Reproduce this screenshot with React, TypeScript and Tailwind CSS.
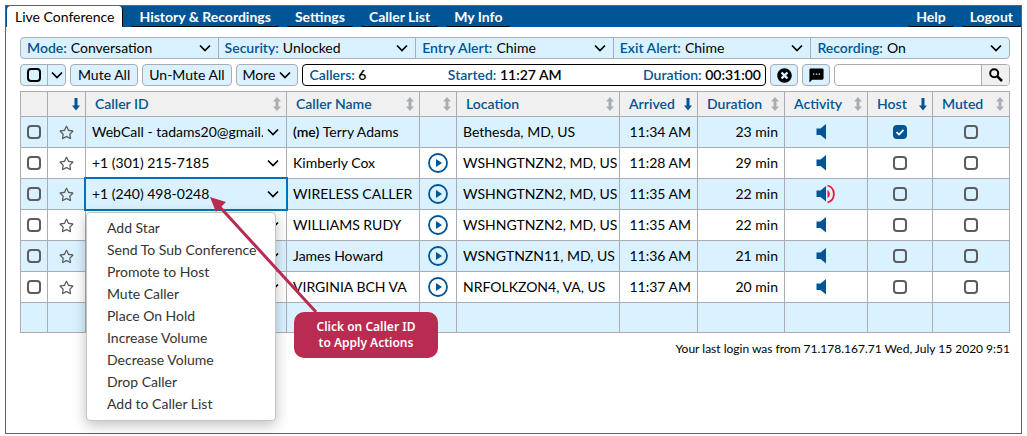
import React, { useState } from 'react';
import { FaRegStar, FaTimesCircle } from 'react-icons/fa';
import { MdSms } from 'react-icons/md';

type Caller = {
  id: string;
  name: string;
  me?: boolean;
  location: string;
  arrived: string;
  duration: string;
  host?: boolean;
  talking?: boolean;
};

const CALLERS: Caller[] = [
  { id: 'WebCall - tadams20@gmail.', name: 'Terry Adams', me: true, location: 'Bethesda, MD, US', arrived: '11:34 AM', duration: '23 min', host: true },
  { id: '+1 (301) 215-7185', name: 'Kimberly Cox', location: 'WSHNGTNZN2, MD, US', arrived: '11:28 AM', duration: '29 min' },
  { id: '+1 (240) 498-0248', name: 'WIRELESS CALLER', location: 'WSHNGTNZN2, MD, US', arrived: '11:35 AM', duration: '22 min', talking: true },
  { id: '', name: 'WILLIAMS RUDY', location: 'WSHNGTNZN2, MD, US', arrived: '11:35 AM', duration: '22 min' },
  { id: '', name: 'James Howard', location: 'WSNGTNZN11, MD, US', arrived: '11:36 AM', duration: '21 min' },
  { id: '', name: 'VIRGINIA BCH VA', location: 'NRFOLKZON4, VA, US', arrived: '11:37 AM', duration: '20 min' },
];

const ACTIONS = [
  'Add Star',
  'Send To Sub Conference',
  'Promote to Host',
  'Mute Caller',
  'Place On Hold',
  'Increase Volume',
  'Decrease Volume',
  'Drop Caller',
  'Add to Caller List',
];

const SETTINGS = [
  { id: 'mode', label: 'Mode:', options: ['Conversation', 'Presentation', 'Q&A'] },
  { id: 'security', label: 'Security:', options: ['Unlocked', 'Locked'] },
  { id: 'entry', label: 'Entry Alert:', options: ['Chime', 'None'] },
  { id: 'exit', label: 'Exit Alert:', options: ['Chime', 'None'] },
  { id: 'recording', label: 'Recording:', options: ['On', 'Off'] },
];

const COLUMNS = [
  { title: '', sort: '', width: 'w-[27px]' },
  { title: '', sort: 'down', width: 'w-[38px]' },
  { title: 'Caller ID', sort: 'both', width: 'w-[201px]' },
  { title: 'Caller Name', sort: 'both', width: 'w-[133px]' },
  { title: '', sort: 'both', width: 'w-[37px]' },
  { title: 'Location', sort: 'both', width: '' },
  { title: 'Arrived', sort: 'down', width: 'w-[78px]' },
  { title: 'Duration', sort: 'both', width: 'w-[87px]' },
  { title: 'Activity', sort: 'both', width: 'w-[83px]' },
  { title: 'Host', sort: 'down', width: 'w-[65px]' },
  { title: 'Muted', sort: 'both', width: 'w-[77px]' },
];

const Chevron = ({ className = '' }: { className?: string }) => (
  <svg className={`w-3 h-3 shrink-0 pointer-events-none ${className}`} viewBox="0 0 12 12" fill="none" stroke="#000" strokeWidth="1.7">
    <path d="M1 3.5 6 8.5 11 3.5" />
  </svg>
);

const SortIcon = ({ sort }: { sort: string }) => (
  <svg className="w-2 h-[14px] shrink-0" viewBox="0 0 8 14">
    {sort === 'down' ? (
      <path d="M2.5 1h3v7.500H8L4 13.500 0 8.500h2.500z" fill="#005596" />
    ) : (
      <path d="M4 0 8 4.500H5.500v5H8L4 14 0 9.500h2.500v-5H0z" fill="#a9adb3" />
    )}
  </svg>
);

const SearchIcon = () => (
  <svg className="w-[14px] h-[14px]" viewBox="0 0 14 14" fill="none" stroke="#000">
    <circle cx="5.2" cy="5.2" r="4" strokeWidth="2" />
    <path d="M8.300 8.300 13 13" strokeWidth="2.600" />
  </svg>
);

const Check = ({ label, checked = false, dark = false }: { label: string; checked?: boolean; dark?: boolean }) => (
  <span className="relative block w-[14px] h-[14px]">
    <input
      type="checkbox"
      aria-label={label}
      defaultChecked={checked}
      className={`peer block appearance-none w-[14px] h-[14px] border-2 rounded bg-transparent checked:bg-[#005596] checked:border-[#005596] ${
        dark ? 'border-black' : 'border-[#5c5c5c]'
      }`}
    />
    <svg
      className="absolute inset-0 hidden peer-checked:block pointer-events-none"
      viewBox="0 0 14 14"
      fill="none"
      stroke="#fff"
      strokeWidth="1.8"
    >
      <path d="M3.5 7.2 6 9.5 10.5 4.8" />
    </svg>
  </span>
);

const Speaker = ({ talking = false }: { talking?: boolean }) => (
  <svg className="w-5 h-5" viewBox="0 0 20 20" fill="none">
    <path d="M0.500 6.500H4.500L10 2v15.500L4.500 13H0.500z" fill="#005596" />
    {talking && (
      <>
        <path d="M11.500 6c3 1.500 3 6.500 0 8z" fill="#f5123a" />
        <path d="M11.500 1.500c8.500 2.500 8.500 14.500 0 17" stroke="#f5123a" strokeWidth="1.800" />
      </>
    )}
  </svg>
);

const Play = () => (
  <svg className="w-5 h-5" viewBox="0 0 20 20">
    <circle cx="10" cy="10" r="9" fill="none" stroke="#005596" strokeWidth="1.800" />
    <path d="M8 6 14 10 8 14z" fill="#005596" />
  </svg>
);

const NavTab = ({ children }: { children: React.ReactNode }) => (
  <a href="#" className="block h-[21px] px-2 border-b border-black rounded-b-xs font-bold text-white leading-[21px]">
    {children}
  </a>
);

const Hint = () => (
  <div className="absolute left-[122px] top-[17px] z-20 w-[230px] pointer-events-none">
    <svg className="block w-[112px] h-[116px]" viewBox="0 0 112 116">
      <path d="M10 9 108 116" stroke="#b92b50" strokeWidth="3" />
      <path d="M2 1 18 6 8 16z" fill="#b92b50" />
    </svg>
    <div className="ml-[86px] h-[46px] flex items-center justify-center rounded-[10px] bg-[#b92b50] text-white text-center text-xs leading-4 font-semibold font-['Noto_Sans',sans-serif]">
      Click on Caller ID
      <br />
      to Apply Actions
    </div>
  </div>
);

export default function App() {
  const [selected, setSelected] = useState<number>(2);

  return (
    <div className="p-[5px] pb-0.5 text-sm text-black font-['Lato',sans-serif]">
      <div className="min-h-[429px] border border-[#5f6368] bg-white">
        <nav className="h-[21px] flex items-start gap-2 pl-px bg-[#005596]" aria-label="Main">
          <a href="#" className="block h-[21px] px-2 bg-white rounded-t-sm border-r border-black leading-[21px]">
            Live Conference
          </a>
          <NavTab>History &amp; Recordings</NavTab>
          <NavTab>Settings</NavTab>
          <NavTab>Caller List</NavTab>
          <NavTab>My Info</NavTab>
          <div className="ml-auto flex gap-2">
            <NavTab>Help</NavTab>
            <NavTab>Logout</NavTab>
          </div>
        </nav>

        <main className="pl-[14px] pr-[11px] pt-[10px]">
          <div className="grid grid-cols-5 h-[22px] border border-[#a9adb3] rounded bg-[#daf2ff] divide-x divide-[#a9adb3]">
            {SETTINGS.map((s) => (
              <div key={s.id} className="relative flex items-center pl-[6px] h-5">
                <label htmlFor={s.id} className="font-semibold text-[#005596] pr-1 leading-5">
                  {s.label}
                </label>
                <select id={s.id} className="flex-1 min-w-0 h-5 leading-5 appearance-none bg-transparent">
                  {s.options.map((o) => (
                    <option key={o}>{o}</option>
                  ))}
                </select>
                <Chevron className="absolute right-[7px] top-1" />
              </div>
            ))}
          </div>

          <div className="flex gap-1 h-[22px] mt-[5px]">
            <div className="flex w-[46px] border border-[#a9adb3] rounded bg-[#daf2ff]">
              <div className="w-[27px] flex items-center justify-center border-r border-[#a9adb3]">
                <Check label="Select all callers" dark />
              </div>
              <button className="flex-1 flex items-center justify-center" aria-label="Selection options">
                <Chevron />
              </button>
            </div>
            <button className="px-[7px] border border-[#a9adb3] rounded bg-[#daf2ff] leading-5">Mute All</button>
            <button className="px-[6px] border border-[#a9adb3] rounded bg-[#daf2ff] leading-5">Un-Mute All</button>
            <button className="px-[6px] flex items-center gap-1 border border-[#a9adb3] rounded bg-[#daf2ff] leading-5">
              More <Chevron />
            </button>
            <div className="flex-1 flex justify-between pl-[6px] pr-1 border border-black rounded font-semibold leading-5">
              <span><span className="text-[#005596]">Callers:</span> 6</span>
              <span><span className="text-[#005596]">Started:</span> 11:27 AM</span>
              <span><span className="text-[#005596]">Duration:</span> 00:31:00</span>
            </div>
            <button className="w-7 flex items-center justify-center border border-[#a9adb3] rounded bg-[#daf2ff]" aria-label="End conference">
              <FaTimesCircle size={15} />
            </button>
            <button className="w-7 flex items-center justify-center border border-[#a9adb3] rounded bg-[#daf2ff]" aria-label="Chat">
              <MdSms size={17} />
            </button>
            <div className="flex w-44 border border-[#a9adb3] rounded overflow-hidden">
              <input type="text" aria-label="Search callers" className="flex-1 min-w-0 px-1 outline-none" />
              <button className="w-7 flex items-center justify-center border-l border-[#a9adb3] bg-[#f0f0f0]" aria-label="Search">
                <SearchIcon />
              </button>
            </div>
          </div>

          <table className="w-full mt-[5px] table-fixed border-collapse">
            <thead>
              <tr className="h-[25px] bg-[#f0f0f0]">
                {COLUMNS.map((c, i) => (
                  <th key={i} className={`p-0 border border-[#a9adb3] font-semibold text-[#005596] text-left ${c.width}`}>
                    <div className="flex items-center justify-between pl-[9px] pr-[5px]">
                      <span className="whitespace-nowrap leading-6">{c.title}</span>
                      {c.sort && <SortIcon sort={c.sort} />}
                    </div>
                  </th>
                ))}
              </tr>
            </thead>
            <tbody>
              {CALLERS.map((c, i) => (
                <tr key={c.name} className="h-[31px] odd:bg-[#daf2ff] [&>td]:border [&>td]:border-[#a9adb3] [&>td]:p-0">
                  <td>
                    <div className="flex justify-center">
                      <Check label={`Select ${c.name}`} />
                    </div>
                  </td>
                  <td>
                    <button className="w-full flex justify-center" aria-label={`Star ${c.name}`}>
                      <FaRegStar size={15} className="text-[#5c5c5c]" />
                    </button>
                  </td>
                  <td className="relative">
                    <button
                      className={`w-full h-[30px] pl-[6px] pr-[7px] flex items-center gap-1 ${
                        selected === i ? 'outline-2 outline-[#0072bc]' : ''
                      }`}
                      aria-label={`Actions for ${c.name}`}
                      onClick={() => setSelected(selected === i ? -1 : i)}
                    >
                      <span className="flex-1 min-w-0 overflow-hidden whitespace-nowrap text-left leading-5">{c.id}</span>
                      <Chevron />
                    </button>
                    {selected === i && (
                      <>
                        <ul className="absolute left-0 top-[33px] z-10 w-[190px] pt-1 pb-[5px] bg-white border border-[#c4c4c4] rounded shadow-[0_4px_14px_rgba(0,0,0,0.25)]">
                          {ACTIONS.map((a) => (
                            <li key={a}>
                              <button className="block w-full pl-5 h-[22px] leading-[22px] text-left whitespace-nowrap text-[#333]">{a}</button>
                            </li>
                          ))}
                        </ul>
                        <Hint />
                      </>
                    )}
                  </td>
                  <td>
                    <div className="pl-[6px] whitespace-nowrap">
                      {c.me && <span className="font-semibold">(me) </span>}
                      {c.name}
                    </div>
                  </td>
                  <td>
                    {!c.me && (
                      <button className="w-full flex justify-center" aria-label={`Play name of ${c.name}`}>
                        <Play />
                      </button>
                    )}
                  </td>
                  <td>
                    <div className="pl-[6px] overflow-hidden whitespace-nowrap">{c.location}</div>
                  </td>
                  <td>
                    <div className="pr-[6px] text-right whitespace-nowrap">{c.arrived}</div>
                  </td>
                  <td>
                    <div className="pr-[6px] text-right">{c.duration}</div>
                  </td>
                  <td>
                    <div className="flex justify-center">
                      <Speaker talking={c.talking} />
                    </div>
                  </td>
                  <td>
                    <div className="flex justify-center">
                      <Check label={`${c.name} is host`} checked={c.host} />
                    </div>
                  </td>
                  <td>
                    <div className="flex justify-center">
                      <Check label={`${c.name} is muted`} />
                    </div>
                  </td>
                </tr>
              ))}
              <tr className="h-[30px] bg-[#daf2ff]">
                {COLUMNS.map((_, i) => (
                  <td key={i} className="border border-[#a9adb3]" />
                ))}
              </tr>
            </tbody>
          </table>

          <p className="mt-2 text-right text-xs leading-4">
            Your last login was from 71.178.167.71 Wed, July 15 2020 9:51
          </p>
        </main>
      </div>
    </div>
  );
}
